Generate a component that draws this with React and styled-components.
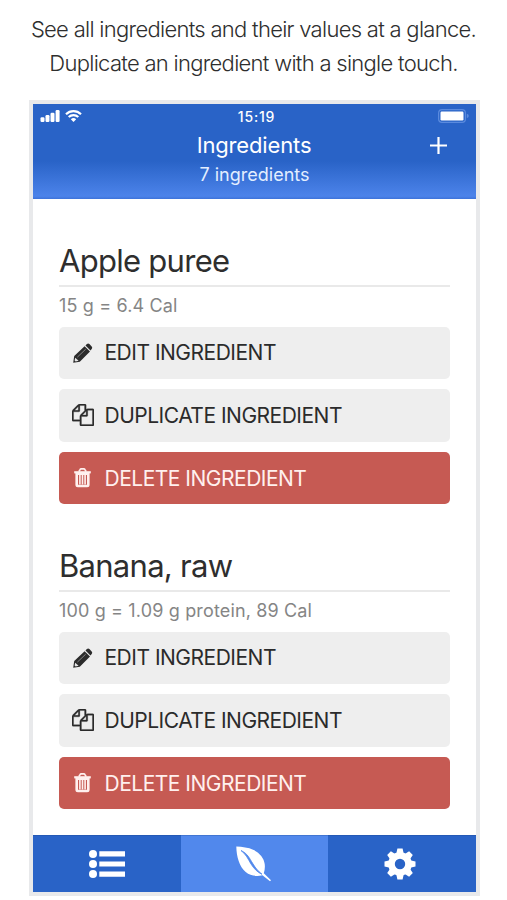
import React from 'react';
import styled, { createGlobalStyle } from 'styled-components';

const GlobalStyle = createGlobalStyle`
  * {
    box-sizing: border-box;
  }

  body {
    margin: 0;
    background: #fff;
    font-family: Inter, "Liberation Sans", sans-serif;
    color: #2e2e2e;
  }
`;

const Page = styled.div`
  height: 900px;
  overflow: hidden;
`;

const Caption = styled.p`
  margin: 0;
  padding-top: 12px;
  height: 100px;
  font-size: 22px;
  font-weight: 300;
  line-height: 34px;
  letter-spacing: -0.71px;
  text-align: center;
  white-space: nowrap;
`;

const CaptionLine = styled.span`
  display: block;
`;

const Phone = styled.div`
  display: flex;
  flex-direction: column;
  width: 451px;
  height: 796px;
  margin-left: 29px;
  border: 4px solid #e8e9eb;
`;

const Header = styled.header`
  height: 95px;
  flex-shrink: 0;
  color: #fff;
  background: linear-gradient(#2963c7 0%, #2963c7 60%, #4c83ea 97%, #3d73da 100%);
`;

const StatusBar = styled.div`
  display: grid;
  grid-template-columns: 1fr auto 1fr;
  align-items: center;
  height: 24px;
  padding: 0 7px 0 7px;
`;

const Signals = styled.div`
  display: flex;
  gap: 5px;
`;

const Clock = styled.span`
  padding-left: 4px;
  font-size: 14px;
  font-weight: 500;
  letter-spacing: 0.8px;
`;

const Battery = styled.svg`
  justify-self: end;
`;

const TitleBar = styled.div`
  display: grid;
  grid-template-columns: 1fr auto 1fr;
  align-items: center;
  height: 34px;
  padding-right: 29px;
  padding-left: 28px;
`;

const Title = styled.h1`
  grid-column: 2;
  margin: 0;
  font-size: 22px;
  font-weight: 400;
  letter-spacing: -0.15px;
`;

const AddButton = styled.button`
  display: flex;
  justify-self: end;
  padding: 0;
  border: 0;
  background: none;
  color: #fff;
`;

const Subtitle = styled.div`
  font-size: 18px;
  line-height: 26px;
  text-align: center;
  color: #e3eeff;
`;

const Content = styled.main`
  height: 636px;
  flex-shrink: 0;
  overflow: hidden;
  padding: 38px 26px 0;
`;

const Ingredient = styled.section`
  height: 305px;
`;

const IngredientName = styled.h2`
  height: 50px;
  margin: 0;
  border-bottom: 2px solid #e9e9e9;
  font-size: 31px;
  font-weight: 400;
  line-height: 48px;
  letter-spacing: -0.72px;
`;

const Values = styled.p`
  margin: 0;
  height: 39.5px;
  font-size: 18px;
  line-height: 37px;
  letter-spacing: 0.15px;
  color: #858585;
`;

const Actions = styled.div`
  display: flex;
  flex-direction: column;
  gap: 9.8px;
`;

const ActionButton = styled.button`
  display: flex;
  align-items: center;
  height: 52.8px;
  padding: 0 0 0 13px;
  border: 0;
  border-radius: 5px;
  background: ${props => props.$danger ? '#c65a53' : '#eee'};
  color: ${props => props.$danger ? '#fff0ee' : '#2b2b2b'};
  font-family: inherit;
  font-size: 21px;
  font-weight: 400;
  letter-spacing: -0.5px;

  svg {
    flex-shrink: 0;
    margin-right: 10.5px;
  }
`;

const TabBar = styled.nav`
  display: grid;
  grid-template-columns: 1fr 1fr 1fr;
  height: 57px;
  flex-shrink: 0;
`;

const Tab = styled.button`
  display: flex;
  align-items: center;
  justify-content: center;
  padding: 0;
  border: 0;
  border-top: 1px solid ${props => props.$active ? '#4175d2' : '#2459b5'};
  background: ${props => props.$active ? '#5188ec' : '#2963c7'};
  color: #fff;

  &:last-child {
    padding-right: 5px;
  }
`;

const CellularIcon = () => (
  <svg width="20" height="12" viewBox="0 0 20 12" fill="currentColor">
    <rect x="0.5" y="7.2" width="4" height="4.8" rx="1.2" />
    <rect x="5.5" y="5" width="4" height="7" rx="1.2" />
    <rect x="10.5" y="2.7" width="4" height="9.3" rx="1.2" />
    <rect x="15.6" y="0" width="4" height="12" rx="1.2" />
  </svg>
);

const WifiIcon = () => (
  <svg width="17" height="12" viewBox="0 0 17 12" fill="none" stroke="currentColor" strokeWidth="2.2">
    <path d="M1 4.2a10.8 10.8 0 0 1 15 0" />
    <path d="M3.7 7a7 7 0 0 1 9.6 0" />
    <path d="M8.5 12L5.8 9.3a3.9 3.9 0 0 1 5.4 0z" fill="currentColor" stroke="none" />
  </svg>
);

const BatteryIcon = () => (
  <Battery width="31" height="14" viewBox="0 0 31 14">
    <rect x="0.6" y="0.6" width="26.8" height="12.8" rx="3.4" fill="none" stroke="#5a8ade" strokeWidth="1.2" />
    <rect x="2.5" y="2.5" width="23" height="9" rx="1.2" fill="#fff" />
    <path d="M28.8 4.8q2 .6 2 2.2t-2 2.2z" fill="#5a8ade" />
  </Battery>
);

const PlusIcon = () => (
  <svg width="17" height="17" viewBox="0 0 17 17" stroke="currentColor" strokeWidth="2.2">
    <path d="M8.5 0v17M0 8.5h17" />
  </svg>
);

const PencilIcon = () => (
  <svg width="22" height="22" viewBox="0 0 22 22">
    <path d="M1.200 20.700l1-6.700L12.600 4.200l5.400 5.400L7.800 19.700zM13.500 3.400l1.400-1.300q1.300-1 2.500 0l2.300 2.400q1.100 1.300 0 2.500l-1.200 1.600z" fill="currentColor" />
    <path d="M5.300 15.200l8.400-8" fill="none" stroke="#aaa" strokeWidth="0.700" />
    <path d="M3.200 15.800l3.400 3-3 .7-1-1z" fill="#e6e6e6" />
  </svg>
);

const FilesIcon = () => (
  <svg width="22" height="22" viewBox="0 0 1792 1792" fill="currentColor" stroke="currentColor" strokeWidth="24">
    <path d="M1696 384q40 0 68 28t28 68v1216q0 40-28 68t-68 28h-960q-40 0-68-28t-28-68v-288h-544q-40 0-68-28t-28-68v-672q0-40 20-88t48-76l408-408q28-28 76-48t88-20h416q40 0 68 28t28 68v328q68-40 128-40h416zm-544 213l-299 299h299v-299zm-640-384l-299 299h299v-299zm196 647l316-316v-416h-384v416q0 40-28 68t-68 28h-416v640h512v-256q0-40 20-88t48-76zm956 804v-1152h-384v416q0 40-28 68t-68 28h-416v640h896z" />
  </svg>
);

const TrashIcon = () => (
  <svg width="22" height="22" viewBox="0 0 22 22" fill="none" stroke="currentColor">
    <path d="M6.900 4.600l1.100-2q.4-.8 1.300-.8h2.400q.9 0 1.300.8l1.100 2" strokeWidth="1.700" />
    <path d="M2.200 5.300h16.600" strokeWidth="2.200" />
    <path d="M4.700 6v11.800q0 1.200 1.200 1.200h9.200q1.200 0 1.200-1.200V6" strokeWidth="2.600" />
    <path d="M5 7h11" strokeWidth="2" />
    <path d="M7.900 8v9.500M10.500 8v9.500M13.100 8v9.500" strokeWidth="1.600" />
  </svg>
);

const ListIcon = () => (
  <svg width="36" height="30" viewBox="0 0 36 30" fill="currentColor">
    <circle cx="4" cy="5" r="4" />
    <circle cx="4" cy="15" r="4" />
    <circle cx="4" cy="25" r="4" />
    <path d="M10.3 2.3h25.700v5.200h-25.700zM10.3 12.400h25.700v5.200h-25.700zM10.3 22.500h25.700v5.200h-25.700z" />
  </svg>
);

const LeafIcon = () => (
  <svg width="36" height="36" viewBox="0 0 36 36">
    <path d="M.3.5C6.500 1 12 1.200 17.700 4c6 3 10.300 8 11 14 .4 3.300.1 6.200-.9 9.200l7.200 7-1 1.100-7.600-6c-6 1.300-12 .5-16.700-3.400C3.300 20.500.6 11 .3.500z" fill="#fff" />
    <path d="M5 4.500c6.500 3 8.500 7.800 11.500 12.600 2.500 4.200 5.500 8 9.500 11.200-4.800-2.300-8.300-5.800-11-10.300C12 13 10 8.300 5 4.500z" fill="#5188ec" stroke="#5188ec" strokeWidth="0.800" />
  </svg>
);

const GearIcon = () => (
  <svg width="32" height="32" viewBox="-16 -16 32 32" fill="currentColor">
    {[0, 45, 90, 135].map((angle) => (
      <path key={angle} transform={`rotate(${angle})`} d="M-2.600-15.500h5.200l1.200 5.500h-7.600zM-2.600 15.500h5.200l1.200-5.500h-7.600z" />
    ))}
    <circle r="8.500" fill="none" stroke="currentColor" strokeWidth="6.600" />
  </svg>
);

const ingredients = [
  { name: 'Apple puree', values: '15 g = 6.4 Cal' },
  { name: 'Banana, raw', values: '100 g = 1.09 g protein, 89 Cal' },
];

const IngredientEntry = ({ ingredient }) => (
  <Ingredient>
    <IngredientName>{ingredient.name}</IngredientName>
    <Values>{ingredient.values}</Values>
    <Actions>
      <ActionButton><PencilIcon />EDIT INGREDIENT</ActionButton>
      <ActionButton><FilesIcon />DUPLICATE INGREDIENT</ActionButton>
      <ActionButton $danger><TrashIcon />DELETE INGREDIENT</ActionButton>
    </Actions>
  </Ingredient>
);

const App = () => (
  <>
    <GlobalStyle />
    <Page>
      <Caption>
        <CaptionLine>See all ingredients and their values at a glance.</CaptionLine>
        <CaptionLine>Duplicate an ingredient with a single touch.</CaptionLine>
      </Caption>
      <Phone>
        <Header>
          <StatusBar>
            <Signals>
              <CellularIcon />
              <WifiIcon />
            </Signals>
            <Clock>15:19</Clock>
            <BatteryIcon />
          </StatusBar>
          <TitleBar>
            <Title>Ingredients</Title>
            <AddButton aria-label="Add ingredient"><PlusIcon /></AddButton>
          </TitleBar>
          <Subtitle>7 ingredients</Subtitle>
        </Header>
        <Content>
          {ingredients.map((ingredient) => (
            <IngredientEntry key={ingredient.name} ingredient={ingredient} />
          ))}
        </Content>
        <TabBar>
          <Tab aria-label="List"><ListIcon /></Tab>
          <Tab aria-label="Ingredients" $active><LeafIcon /></Tab>
          <Tab aria-label="Settings"><GearIcon /></Tab>
        </TabBar>
      </Phone>
    </Page>
  </>
);

export default App;
